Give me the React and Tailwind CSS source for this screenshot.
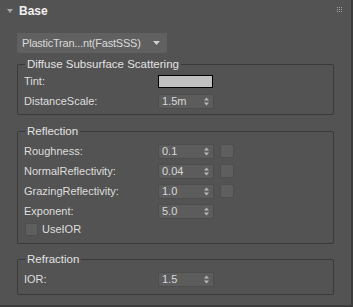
import React from "react";

const font = { fontFamily: '"Liberation Sans", Arial, sans-serif' };

function Spinner({ value }) {
  return (
    <div className="flex h-[15px] w-[56px] items-center justify-between border border-[#4d4d4d] bg-[#5c5c5c] pl-[3px] pr-[4px]">
      <span className="text-[11px] leading-none text-[#d8d8d8]">{value}</span>
      <svg width="5" height="9" viewBox="0 0 5 9">
        <path d="M0 3.5 L2.5 0.5 L5 3.5 Z" fill="#b8b8b8" />
        <path d="M0 5.5 L2.5 8.5 L5 5.5 Z" fill="#b8b8b8" />
      </svg>
    </div>
  );
}

function Check() {
  return <div className="h-[14px] w-[14px] rounded-[2px] border border-[#4e4e4e] bg-[#5e5e5e]" />;
}

function Row({ label, children }) {
  return (
    <div className="flex h-[20px] items-center">
      <div className="w-[134px] text-[11px] leading-none text-[#dedede]">{label}</div>
      <div className="flex items-center gap-[6px]">{children}</div>
    </div>
  );
}

function Group({ title, className, children }) {
  return (
    <fieldset className={"w-[317px] rounded-[2px] border border-[#3a3a3a] pl-[6px] " + className}>
      <legend className="ml-[1px] px-[2px] text-[11.5px] leading-[14px] text-[#e2e2e2]">{title}</legend>
      {children}
    </fieldset>
  );
}

export default function App() {
  return (
    <div className="h-[307px] w-[353px] bg-[#3c3c3c]" style={font}>
      <div className="relative h-[305px] w-[351px] bg-[#535353]">
        <div className="flex h-[22px] items-center pl-[7px]">
          <svg width="6" height="4" viewBox="0 0 6 4" className="mr-[6px]">
            <path d="M0 0 L6 0 L3 4 Z" fill="#a8a8a8" />
          </svg>
          <span className="text-[12px] font-bold text-[#f0f0f0]">Base</span>
        </div>
        <div className="absolute right-[9px] top-[7px] grid grid-cols-3 gap-[1px]">
          {Array.from({ length: 9 }).map((_, i) => (
            <div key={i} className="h-[1px] w-[1px] bg-[#a0a0a0]" />
          ))}
        </div>
        <div className="ml-[17px] mt-[11px] flex h-[20px] w-[150px] items-center justify-between bg-[#606060] pl-[5px] pr-[7px]">
          <span className="text-[11px] leading-none tracking-[-0.2px] text-[#dadada]">PlasticTran...nt(FastSSS)</span>
          <svg width="7" height="4" viewBox="0 0 7 4">
            <path d="M0 0 L7 0 L3.5 4 Z" fill="#d0d0d0" />
          </svg>
        </div>
        <div className="ml-[17px] mt-[4px] flex flex-col">
          <Group title="Diffuse Subsurface Scattering" className="pb-[3px]">
            <Row label="Tint:">
              <div className="h-[13px] w-[55px] border border-black bg-[#c0c0c0]" />
            </Row>
            <Row label="DistanceScale:">
              <Spinner value="1.5m" />
            </Row>
          </Group>
          <Group title="Reflection" className="mt-[9px] pb-[6px] pt-[3px]">
            <Row label="Roughness:">
              <Spinner value="0.1" />
              <Check />
            </Row>
            <Row label="NormalReflectivity:">
              <Spinner value="0.04" />
              <Check />
            </Row>
            <Row label="GrazingReflectivity:">
              <Spinner value="1.0" />
              <Check />
            </Row>
            <Row label="Exponent:">
              <Spinner value="5.0" />
            </Row>
            <div className="flex h-[16px] items-center pl-[1px]">
              <div className="mr-[4px] h-[13px] w-[13px] border border-[#4e4e4e] bg-[#5e5e5e]" />
              <span className="text-[11px] leading-none text-[#dedede]">UseIOR</span>
            </div>
          </Group>
          <Group title="Refraction" className="mt-[8px] pb-[5px] pt-[3px]">
            <Row label="IOR:">
              <Spinner value="1.5" />
            </Row>
          </Group>
        </div>
      </div>
    </div>
  );
}
